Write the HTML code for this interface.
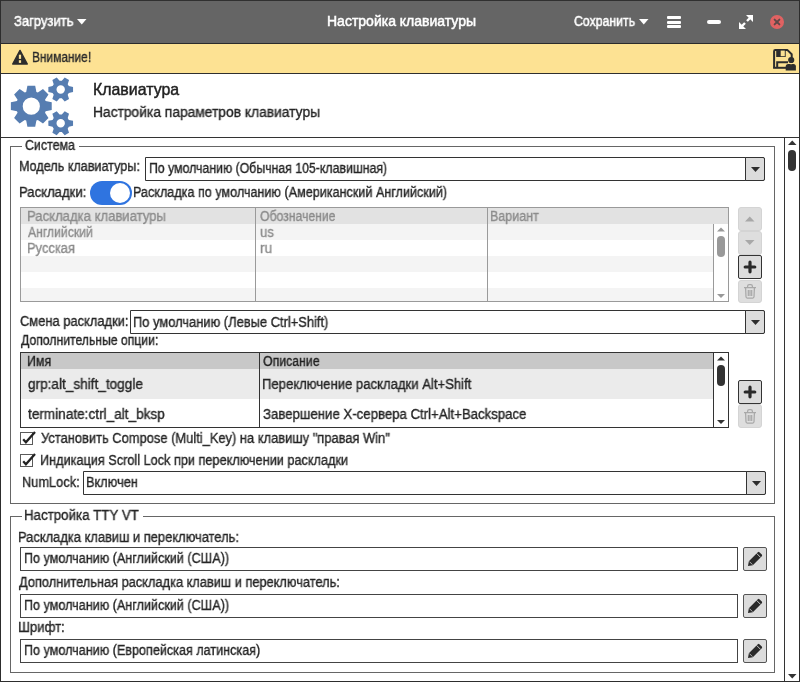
<!DOCTYPE html>
<html><head><meta charset="utf-8"><style>
html,body{margin:0;padding:0;width:800px;height:682px;overflow:hidden;background:#fff}
.t{position:absolute;white-space:pre;line-height:1;font-family:'Liberation Sans', sans-serif;will-change:transform;-webkit-text-stroke:0.35px currentColor}
</style></head><body>
<div style="position:absolute;left:0px;top:0px;width:800px;height:682px;background:#ffffff"></div><div style="position:absolute;left:0px;top:0px;width:800px;height:44px;background:#656565"></div><div style="position:absolute;left:0px;top:43px;width:800px;height:1px;background:#2b2b2b"></div><div style="position:absolute;left:0px;top:44px;width:800px;height:29px;background:#fde293"></div><div style="position:absolute;left:0px;top:73px;width:800px;height:1px;background:#2f2f2f"></div><div style="position:absolute;left:0px;top:137px;width:800px;height:1px;background:#333"></div><div style="position:absolute;left:0px;top:0px;width:800px;height:1px;background:#303030"></div><div style="position:absolute;left:0px;top:681px;width:800px;height:1px;background:#2d2d2d"></div><div style="position:absolute;left:0px;top:0px;width:1px;height:682px;background:#2d2d2d"></div><div style="position:absolute;left:799px;top:0px;width:1px;height:682px;background:#2d2d2d"></div><div class="t" style="left:14px;top:14px;font-size:14.0px;color:#ffffff;-webkit-text-stroke:0.5px #fff;transform:scaleX(0.9286);transform-origin:0 0;">Загрузить</div><svg style="position:absolute;left:77px;top:19px" width="10" height="6"><path d="M0,0 H9.5 L4.75,5.5 Z" fill="#fff"/></svg><div class="t" style="left:327px;top:14px;font-size:14.0px;color:#ffffff;-webkit-text-stroke:0.5px #fff;">Настройка клавиатуры</div><div class="t" style="left:574px;top:14px;font-size:14.0px;color:#ffffff;-webkit-text-stroke:0.5px #fff;transform:scaleX(0.8786);transform-origin:0 0;">Сохранить</div><svg style="position:absolute;left:639px;top:19px" width="10" height="6"><path d="M0,0 H9.5 L4.75,5.5 Z" fill="#fff"/></svg><div style="position:absolute;left:667px;top:16px;width:14px;height:3px;background:#fff;border-radius:1px"></div><div style="position:absolute;left:667px;top:20.5px;width:14px;height:3px;background:#fff;border-radius:1px"></div><div style="position:absolute;left:667px;top:25px;width:14px;height:3px;background:#fff;border-radius:1px"></div><div style="position:absolute;left:707px;top:20px;width:14px;height:4px;background:#fff;border-radius:2px"></div><svg style="position:absolute;left:738px;top:14px" width="16" height="16" viewBox="0 0 16 16">
<path d="M8,1 H15 V8 Z M1,8 V15 H8 Z" fill="#fff"/>
<path d="M12.5,3.5 L9,7 M3.5,12.5 L7,9" stroke="#fff" stroke-width="2.4"/></svg><svg style="position:absolute;left:769px;top:14px" width="16" height="16" viewBox="0 0 16 16">
<circle cx="8" cy="8" r="7" fill="#e06262"/>
<path d="M5.6,5.6 L10.4,10.4 M10.4,5.6 L5.6,10.4" stroke="#5e4848" stroke-width="1.9" stroke-linecap="round"/></svg><svg style="position:absolute;left:11px;top:49px" width="18" height="17" viewBox="0 0 18 17">
<path d="M9,1.4 L16.3,15 H1.7 Z" fill="#2d2d2d" stroke="#2d2d2d" stroke-width="1.4" stroke-linejoin="round"/>
<rect x="7.85" y="5.7" width="2.25" height="4.2" fill="#fde293"/><rect x="7.85" y="11.2" width="2.25" height="2.7" fill="#fde293"/></svg><div class="t" style="left:32px;top:50px;font-size:14.0px;color:#2a2a2a;transform:scaleX(0.8500);transform-origin:0 0;">Внимание!</div><svg style="position:absolute;left:772px;top:48px" width="26" height="24" viewBox="0 0 26 24">
<path d="M2.1,19.8 V3.3 Q2.1,2.1 3.3,2.1 H15.5 L19.7,6.3 V11" fill="none" stroke="#2d2d2d" stroke-width="2" stroke-linejoin="round"/>
<path d="M1.1,19.8 H14" stroke="#2d2d2d" stroke-width="2"/>
<rect x="4.2" y="2" width="9.5" height="7" fill="#2d2d2d"/><rect x="8.7" y="2.6" width="4.1" height="5.6" fill="#fde293"/>
<path d="M5.2,19.8 V14.2 H16" fill="none" stroke="#2d2d2d" stroke-width="2"/>
<circle cx="19.2" cy="12" r="3.1" fill="#2d2d2d"/>
<path d="M13.7,22.5 V18.6 Q13.7,16.1 16.2,16.1 H21.4 Q23.9,16.1 23.9,18.6 V22.5 Z" fill="#2d2d2d"/>
<path d="M18.2,16.6 H20.2" stroke="#7a6a40" stroke-width="0.8"/></svg><svg style="position:absolute;left:0;top:0" width="90" height="137"><path d="M26.20,91.88 L27.40,85.77 L35.20,85.77 L36.40,91.88 L37.82,92.47 L42.99,89.00 L48.50,94.51 L45.03,99.68 L45.62,101.10 L51.73,102.30 L51.73,110.10 L45.62,111.30 L45.03,112.72 L48.50,117.89 L42.99,123.40 L37.82,119.93 L36.40,120.52 L35.20,126.63 L27.40,126.63 L26.20,120.52 L24.78,119.93 L19.61,123.40 L14.10,117.89 L17.57,112.72 L16.98,111.30 L10.87,110.10 L10.87,102.30 L16.98,101.10 L17.57,99.68 L14.10,94.51 L19.61,89.00 L24.78,92.47 Z M39.90,106.20 A8.6,8.6 0 1,0 22.70,106.20 A8.6,8.6 0 1,0 39.90,106.20 Z M68.82,86.10 L73.05,87.00 L73.05,92.00 L68.82,92.90 L67.70,94.83 L69.04,98.94 L64.71,101.44 L61.81,98.23 L59.59,98.23 L56.69,101.44 L52.36,98.94 L53.70,94.83 L52.58,92.90 L48.35,92.00 L48.35,87.00 L52.58,86.10 L53.70,84.17 L52.36,80.06 L56.69,77.56 L59.59,80.77 L61.81,80.77 L64.71,77.56 L69.04,80.06 L67.70,84.17 Z M64.90,89.50 A4.2,4.2 0 1,0 56.50,89.50 A4.2,4.2 0 1,0 64.90,89.50 Z M68.82,119.90 L73.05,120.80 L73.05,125.80 L68.82,126.70 L67.70,128.63 L69.04,132.74 L64.71,135.24 L61.81,132.03 L59.59,132.03 L56.69,135.24 L52.36,132.74 L53.70,128.63 L52.58,126.70 L48.35,125.80 L48.35,120.80 L52.58,119.90 L53.70,117.97 L52.36,113.86 L56.69,111.36 L59.59,114.57 L61.81,114.57 L64.71,111.36 L69.04,113.86 L67.70,117.97 Z M64.90,123.30 A4.2,4.2 0 1,0 56.50,123.30 A4.2,4.2 0 1,0 64.90,123.30 Z" fill="#567db1" fill-rule="evenodd"/></svg><div class="t" style="left:93px;top:82px;font-size:15.9px;color:#222;-webkit-text-stroke:0.45px #222;">Клавиатура</div><div class="t" style="left:93px;top:105px;font-size:14.0px;color:#262626;transform:scaleX(0.9857);transform-origin:0 0;">Настройка параметров клавиатуры</div><div style="position:absolute;left:784px;top:138px;width:1px;height:543px;background:#333"></div><svg style="position:absolute;left:788px;top:140px" width="9" height="6"><path d="M0,5 H8.5 L4.25,0.5 Z" fill="#333"/></svg><div style="position:absolute;left:788px;top:150px;width:8px;height:21px;background:#333;border-radius:4px"></div><svg style="position:absolute;left:788px;top:674px" width="9" height="5"><path d="M0,0 H8.5 L4.25,4.5 Z" fill="#333"/></svg><div style="position:absolute;left:10px;top:146px;width:765px;height:358px;border:1px solid #666;box-sizing:border-box"></div><div style="position:absolute;left:22px;top:143px;width:57px;height:6px;background:#fff"></div><div class="t" style="left:25px;top:138px;font-size:14.0px;color:#262626;transform:scaleX(0.8857);transform-origin:0 0;">Система</div><div class="t" style="left:19px;top:159px;font-size:14.0px;color:#262626;transform:scaleX(0.9000);transform-origin:0 0;">Модель клавиатуры:</div><div style="position:absolute;left:145px;top:157px;width:620px;height:24px;border:1px solid #333;box-sizing:border-box;border-radius:0 2px 2px 0;background:#fff"></div><div style="position:absolute;left:745px;top:157px;width:20px;height:24px;border:1px solid #333;box-sizing:border-box;border-radius:0 2px 2px 0;background:#dcdcdc"></div><svg style="position:absolute;left:751px;top:167px" width="10" height="6"><path d="M0,0 H9 L4.5,5 Z" fill="#2d2d2d"/></svg><div class="t" style="left:149px;top:161px;font-size:14.0px;color:#262626;transform:scaleX(0.8786);transform-origin:0 0;">По умолчанию (Обычная 105-клавишная)</div><div class="t" style="left:19px;top:185px;font-size:14.0px;color:#262626;transform:scaleX(0.9357);transform-origin:0 0;">Раскладки:</div><div style="position:absolute;left:90px;top:181px;width:42px;height:24px;background:#2f74e0;border-radius:12px"></div><div style="position:absolute;left:110px;top:183px;width:20px;height:20px;background:#fff;border-radius:50%"></div><div class="t" style="left:133px;top:185px;font-size:14.0px;color:#262626;transform:scaleX(0.9000);transform-origin:0 0;">Раскладка по умолчанию (Американский Английский)</div><div style="position:absolute;left:20px;top:207px;width:709px;height:95px;border:1px solid #9a9a9a;box-sizing:border-box;background:#fff"></div><div style="position:absolute;left:21px;top:208px;width:707px;height:16px;background:#e2e2e2"></div><div style="position:absolute;left:21px;top:224px;width:692px;height:16px;background:#f4f4f4"></div><div style="position:absolute;left:21px;top:240px;width:692px;height:16px;background:#fff"></div><div style="position:absolute;left:21px;top:256px;width:692px;height:16px;background:#f4f4f4"></div><div style="position:absolute;left:21px;top:272px;width:692px;height:16px;background:#fff"></div><div style="position:absolute;left:21px;top:288px;width:692px;height:13px;background:#f4f4f4"></div><div style="position:absolute;left:255px;top:208px;width:1px;height:93px;background:#9a9a9a"></div><div style="position:absolute;left:487px;top:208px;width:1px;height:93px;background:#9a9a9a"></div><div style="position:absolute;left:713px;top:224px;width:1px;height:77px;background:#9a9a9a"></div><div style="position:absolute;left:714px;top:224px;width:14px;height:77px;background:#fff"></div><svg style="position:absolute;left:717px;top:227px" width="9" height="5"><path d="M0,4.5 H8 L4,0.5 Z" fill="#999"/></svg><div style="position:absolute;left:717px;top:236px;width:8px;height:21px;background:#999;border-radius:4px"></div><svg style="position:absolute;left:717px;top:294px" width="9" height="5"><path d="M0,0 H8 L4,4 Z" fill="#999"/></svg><div class="t" style="left:27px;top:209px;font-size:14.0px;color:#8c8c8c;transform:scaleX(0.9357);transform-origin:0 0;">Раскладка клавиатуры</div><div class="t" style="left:260px;top:209px;font-size:14.0px;color:#8c8c8c;transform:scaleX(0.8714);transform-origin:0 0;">Обозначение</div><div class="t" style="left:490px;top:209px;font-size:14.0px;color:#8c8c8c;transform:scaleX(0.8929);transform-origin:0 0;">Вариант</div><div class="t" style="left:28px;top:225px;font-size:14.0px;color:#8c8c8c;transform:scaleX(0.8714);transform-origin:0 0;">Английский</div><div class="t" style="left:260px;top:225px;font-size:14.0px;color:#8c8c8c;transform:scaleX(0.9429);transform-origin:0 0;">us</div><div class="t" style="left:27px;top:241px;font-size:14.0px;color:#8c8c8c;transform:scaleX(0.9214);transform-origin:0 0;">Русская</div><div class="t" style="left:260px;top:241px;font-size:14.0px;color:#8c8c8c;transform:scaleX(0.9643);transform-origin:0 0;">ru</div><div style="position:absolute;left:738px;top:207px;width:24px;height:24px;background:#dedede;border:1px solid #d4d4d4;box-sizing:border-box;border-radius:3px"></div><svg style="position:absolute;left:745px;top:216px" width="10" height="6"><path d="M0,5.5 H9.5 L4.75,0.5 Z" fill="#a8a8a8"/></svg><div style="position:absolute;left:738px;top:231px;width:24px;height:24px;background:#dedede;border:1px solid #d4d4d4;box-sizing:border-box;border-radius:3px"></div><svg style="position:absolute;left:745px;top:240px" width="10" height="6"><path d="M0,0 H9.5 L4.75,5 Z" fill="#a8a8a8"/></svg><div style="position:absolute;left:738px;top:255px;width:24px;height:24px;background:#dcdcdc;border:1px solid #333;box-sizing:border-box;border-radius:2px"></div><svg style="position:absolute;left:743px;top:260px" width="14" height="14" viewBox="0 0 14 14"><path d="M7,2.2 V11.8 M2.2,7 H11.8" stroke="#2a2a2a" stroke-width="3.2" stroke-linecap="round"/></svg><div style="position:absolute;left:738px;top:280px;width:24px;height:23px;background:#dedede;border:1px solid #d4d4d4;box-sizing:border-box;border-radius:3px"></div><svg style="position:absolute;left:743px;top:283px" width="14" height="16" viewBox="0 0 14 16">
<path d="M1,4.6 H13 M4.6,4.6 V3.2 Q4.6,1.6 6.2,1.6 H7.8 Q9.4,1.6 9.4,3.2 V4.6 M2.6,5 L3,13.8 Q3.1,15 4.2,15 H9.8 Q10.9,15 11,13.8 L11.4,5 M5.3,7 V13 M7,7 V13 M8.7,7 V13" fill="none" stroke="#a8a8a8" stroke-width="1.25"/></svg><div class="t" style="left:20px;top:314px;font-size:14.0px;color:#262626;transform:scaleX(0.9214);transform-origin:0 0;">Смена раскладки:</div><div style="position:absolute;left:130px;top:310px;width:635px;height:24px;border:1px solid #333;box-sizing:border-box;border-radius:0 2px 2px 0;background:#fff"></div><div style="position:absolute;left:745px;top:310px;width:20px;height:24px;border:1px solid #333;box-sizing:border-box;border-radius:0 2px 2px 0;background:#dcdcdc"></div><svg style="position:absolute;left:751px;top:320px" width="10" height="6"><path d="M0,0 H9 L4.5,5 Z" fill="#2d2d2d"/></svg><div class="t" style="left:133px;top:315px;font-size:14.0px;color:#262626;transform:scaleX(0.9214);transform-origin:0 0;">По умолчанию (Левые Ctrl+Shift)</div><div class="t" style="left:21px;top:333px;font-size:14.0px;color:#262626;transform:scaleX(0.8714);transform-origin:0 0;">Дополнительные опции:</div><div style="position:absolute;left:20px;top:352px;width:709px;height:76px;border:1px solid #333;box-sizing:border-box;background:#fff"></div><div style="position:absolute;left:21px;top:353px;width:692px;height:16px;background:#c8c8c8"></div><div style="position:absolute;left:21px;top:369px;width:692px;height:30px;background:#ebebeb"></div><div style="position:absolute;left:259px;top:353px;width:1px;height:74px;background:#333"></div><div style="position:absolute;left:713px;top:353px;width:1px;height:74px;background:#333"></div><svg style="position:absolute;left:717px;top:356px" width="9" height="5"><path d="M0,4.5 H8 L4,0.5 Z" fill="#333"/></svg><div style="position:absolute;left:717px;top:365px;width:8px;height:21px;background:#333;border-radius:4px"></div><svg style="position:absolute;left:717px;top:420px" width="9" height="5"><path d="M0,0 H8 L4,4 Z" fill="#333"/></svg><div class="t" style="left:27px;top:354px;font-size:14.0px;color:#222;transform:scaleX(0.8857);transform-origin:0 0;">Имя</div><div class="t" style="left:263px;top:354px;font-size:14.0px;color:#222;transform:scaleX(0.8786);transform-origin:0 0;">Описание</div><div class="t" style="left:28px;top:377px;font-size:14.0px;color:#262626;transform:scaleX(0.9714);transform-origin:0 0;">grp:alt_shift_toggle</div><div class="t" style="left:262px;top:377px;font-size:14.0px;color:#262626;transform:scaleX(0.9357);transform-origin:0 0;">Переключение раскладки Alt+Shift</div><div class="t" style="left:28px;top:407px;font-size:14.0px;color:#262626;transform:scaleX(0.9714);transform-origin:0 0;">terminate:ctrl_alt_bksp</div><div class="t" style="left:263px;top:407px;font-size:14.0px;color:#262626;transform:scaleX(0.9429);transform-origin:0 0;">Завершение X-сервера Ctrl+Alt+Backspace</div><div style="position:absolute;left:738px;top:380px;width:24px;height:24px;background:#dcdcdc;border:1px solid #333;box-sizing:border-box;border-radius:2px"></div><svg style="position:absolute;left:743px;top:385px" width="14" height="14" viewBox="0 0 14 14"><path d="M7,2.2 V11.8 M2.2,7 H11.8" stroke="#2a2a2a" stroke-width="3.2" stroke-linecap="round"/></svg><div style="position:absolute;left:738px;top:404px;width:24px;height:24px;background:#dedede;border:1px solid #d4d4d4;box-sizing:border-box;border-radius:3px"></div><svg style="position:absolute;left:743px;top:408px" width="14" height="16" viewBox="0 0 14 16">
<path d="M1,4.6 H13 M4.6,4.6 V3.2 Q4.6,1.6 6.2,1.6 H7.8 Q9.4,1.6 9.4,3.2 V4.6 M2.6,5 L3,13.8 Q3.1,15 4.2,15 H9.8 Q10.9,15 11,13.8 L11.4,5 M5.3,7 V13 M7,7 V13 M8.7,7 V13" fill="none" stroke="#a8a8a8" stroke-width="1.25"/></svg><div style="position:absolute;left:20px;top:432px;width:13px;height:13px;border:1px solid #5a5a5a;box-sizing:border-box;background:#fff"></div><svg style="position:absolute;left:20px;top:429px" width="17" height="17" viewBox="0 0 17 17"><path d="M3.2,10.3 L5.9,13.2 L15,3" fill="none" stroke="#222" stroke-width="2.3"/></svg><div class="t" style="left:41px;top:431px;font-size:14.0px;color:#262626;transform:scaleX(0.9214);transform-origin:0 0;">Установить Compose (Multi_Key) на клавишу "правая Win"</div><div style="position:absolute;left:20px;top:454px;width:13px;height:13px;border:1px solid #5a5a5a;box-sizing:border-box;background:#fff"></div><svg style="position:absolute;left:20px;top:451px" width="17" height="17" viewBox="0 0 17 17"><path d="M3.2,10.3 L5.9,13.2 L15,3" fill="none" stroke="#222" stroke-width="2.3"/></svg><div class="t" style="left:40px;top:453px;font-size:14.0px;color:#262626;transform:scaleX(0.9071);transform-origin:0 0;">Индикация Scroll Lock при переключении раскладки</div><div class="t" style="left:22px;top:475px;font-size:14.0px;color:#262626;transform:scaleX(0.9143);transform-origin:0 0;">NumLock:</div><div style="position:absolute;left:83px;top:471px;width:683px;height:24px;border:1px solid #333;box-sizing:border-box;border-radius:0 2px 2px 0;background:#fff"></div><div style="position:absolute;left:746px;top:471px;width:20px;height:24px;border:1px solid #333;box-sizing:border-box;border-radius:0 2px 2px 0;background:#dcdcdc"></div><svg style="position:absolute;left:752px;top:481px" width="10" height="6"><path d="M0,0 H9 L4.5,5 Z" fill="#2d2d2d"/></svg><div class="t" style="left:86px;top:475px;font-size:14.0px;color:#262626;transform:scaleX(0.9143);transform-origin:0 0;">Включен</div><div style="position:absolute;left:10px;top:516px;width:765px;height:157px;border:1px solid #666;box-sizing:border-box"></div><div style="position:absolute;left:22px;top:513px;width:121px;height:6px;background:#fff"></div><div class="t" style="left:24px;top:508px;font-size:14.0px;color:#262626;transform:scaleX(0.9500);transform-origin:0 0;">Настройка TTY VT</div><div class="t" style="left:18px;top:530px;font-size:14.0px;color:#262626;transform:scaleX(0.9214);transform-origin:0 0;">Раскладка клавиш и переключатель:</div><div style="position:absolute;left:20px;top:547px;width:718px;height:24px;border:1px solid #444;box-sizing:border-box;background:#fff"></div><div class="t" style="left:24px;top:551px;font-size:14.0px;color:#262626;transform:scaleX(0.9000);transform-origin:0 0;">По умолчанию (Английский (США))</div><div style="position:absolute;left:743px;top:547px;width:24px;height:24px;background:#dcdcdc;border:1px solid #555;box-sizing:border-box;border-radius:2px"></div><svg style="position:absolute;left:746px;top:550px" width="18" height="18" viewBox="0 0 18 18">
<path d="M2,16 L2.85,11.19 L11.8,2.2 Q12.6,1.4 13.4,2.2 L15.8,4.6 Q16.6,5.4 15.8,6.2 L6.81,15.15 Z" fill="#2a2a2a"/>
<path d="M10.6,3.4 L14.6,7.4" stroke="#dcdcdc" stroke-width="0.9"/>
<path d="M3.4,11.6 L6.4,14.6" stroke="#dcdcdc" stroke-width="0.8"/></svg><div class="t" style="left:19px;top:575px;font-size:14.0px;color:#262626;transform:scaleX(0.9143);transform-origin:0 0;">Дополнительная раскладка клавиш и переключатель:</div><div style="position:absolute;left:20px;top:594px;width:718px;height:24px;border:1px solid #444;box-sizing:border-box;background:#fff"></div><div class="t" style="left:24px;top:598px;font-size:14.0px;color:#262626;transform:scaleX(0.9000);transform-origin:0 0;">По умолчанию (Английский (США))</div><div style="position:absolute;left:743px;top:594px;width:24px;height:24px;background:#dcdcdc;border:1px solid #555;box-sizing:border-box;border-radius:2px"></div><svg style="position:absolute;left:746px;top:597px" width="18" height="18" viewBox="0 0 18 18">
<path d="M2,16 L2.85,11.19 L11.8,2.2 Q12.6,1.4 13.4,2.2 L15.8,4.6 Q16.6,5.4 15.8,6.2 L6.81,15.15 Z" fill="#2a2a2a"/>
<path d="M10.6,3.4 L14.6,7.4" stroke="#dcdcdc" stroke-width="0.9"/>
<path d="M3.4,11.6 L6.4,14.6" stroke="#dcdcdc" stroke-width="0.8"/></svg><div class="t" style="left:18px;top:620px;font-size:14.0px;color:#262626;transform:scaleX(0.9357);transform-origin:0 0;">Шрифт:</div><div style="position:absolute;left:20px;top:639px;width:718px;height:24px;border:1px solid #444;box-sizing:border-box;background:#fff"></div><div class="t" style="left:24px;top:643px;font-size:14.0px;color:#262626;transform:scaleX(0.9000);transform-origin:0 0;">По умолчанию (Европейская латинская)</div><div style="position:absolute;left:743px;top:639px;width:24px;height:24px;background:#dcdcdc;border:1px solid #555;box-sizing:border-box;border-radius:2px"></div><svg style="position:absolute;left:746px;top:642px" width="18" height="18" viewBox="0 0 18 18">
<path d="M2,16 L2.85,11.19 L11.8,2.2 Q12.6,1.4 13.4,2.2 L15.8,4.6 Q16.6,5.4 15.8,6.2 L6.81,15.15 Z" fill="#2a2a2a"/>
<path d="M10.6,3.4 L14.6,7.4" stroke="#dcdcdc" stroke-width="0.9"/>
<path d="M3.4,11.6 L6.4,14.6" stroke="#dcdcdc" stroke-width="0.8"/></svg>
</body></html>
